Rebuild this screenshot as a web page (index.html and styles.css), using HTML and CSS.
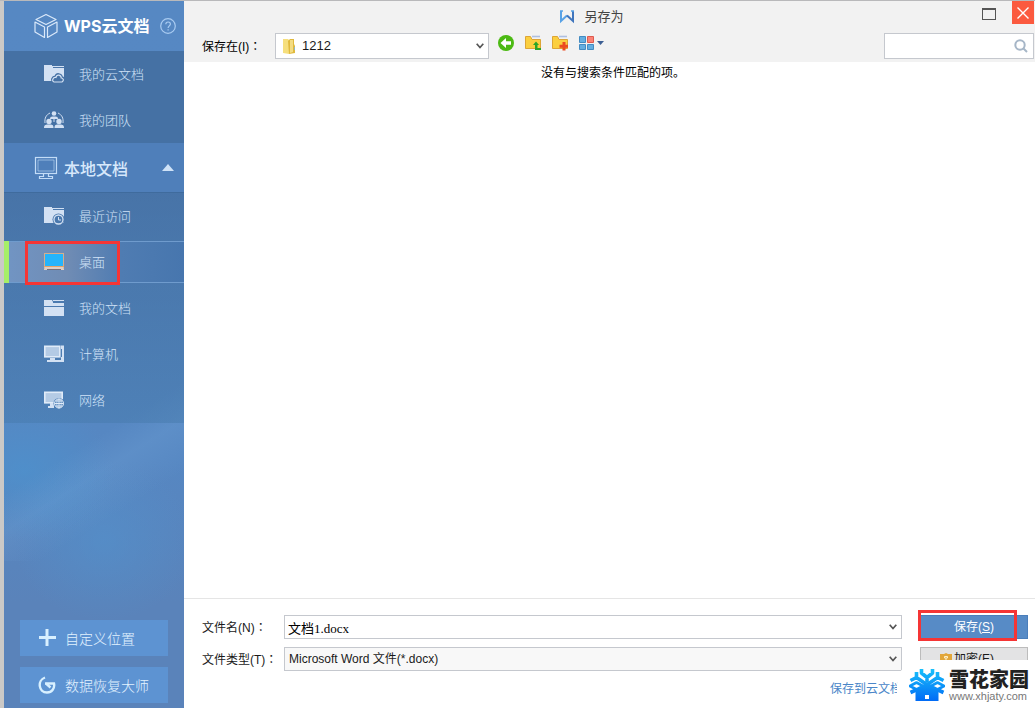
FILE: index.html
```html
<!DOCTYPE html>
<html lang="zh-CN">
<head>
<meta charset="utf-8">
<title>另存为</title>
<link rel="stylesheet" href="styles.css">
</head>
<body>
<div class="dialog">
  <nav class="sidebar">
    <div class="side-head">
      <svg class="head-icon" width="24" height="26" viewBox="0 0 24 26" fill="none" stroke="#dbe9fa" stroke-width="1.2" stroke-linejoin="round"><path d="M12 1.500 22 6.500 12 11.500 2 6.500Z"/><path d="M1 9 10.500 14V24.500L1 19Z"/><path d="M23 9 13.500 14V24.500L23 19Z"/></svg>
      <h1 class="head-title">WPS云文档</h1>
      <button class="help" aria-label="帮助"><svg width="16" height="16" viewBox="0 0 16 16" fill="none" stroke="#a9cbf1" stroke-width="1.2"><circle cx="8" cy="8" r="7.300"/><path d="M5.800 6.300C5.800 3.200 10.500 3.300 10.400 6.100C10.300 7.800 8.100 8 8.100 10M8.100 11.200V12.500"/></svg></button>
    </div>
    <ul class="side-list cloud">
      <li><a class="item" href="#cloud"><svg width="20" height="18" viewBox="0 0 20 18"><path fill="#d3e1f3" d="M0 0H8V1H20V16H0Z"/><path stroke="#4a75a8" d="M9 2.500H20"/><path fill="#d3e1f3" stroke="#4571a4" stroke-width="3" d="M10 16.500H18C20.500 15 19 12.500 17.500 12.700C17 9 12.500 8.500 12 12C8.500 11.500 7.500 15.500 10 16.500Z"/><path fill="#4571a4" stroke="#d3e1f3" stroke-width="1.200" d="M10 17H18C20.500 15.500 19 12.800 17.300 13C17 9.300 12.500 9 12 12.500C8.800 12 7.500 16 10 17Z"/></svg>我的云文档</a></li>
      <li><a class="item" href="#team"><svg width="20" height="18" viewBox="0 0 20 18"><g fill="#d3e1f3"><circle cx="10" cy="2.500" r="2.300"/><path d="M6 8C6 5.500 8 5.500 10 5.500S14 5.500 14 8Z"/><circle cx="5" cy="10.500" r="2.700"/><path d="M0 17C0 13.500 2 13.500 5 13.500S9.500 13.500 9.500 17Z"/><circle cx="15" cy="10.500" r="2.700"/><path d="M10.500 17C10.500 13.500 12 13.500 15 13.500S20 13.500 20 17Z"/></g><path fill="none" stroke="#d3e1f3" d="M6 2C2 4 .5 7 1 12M14 2C18 4 19.500 7 19 12M10 8V11"/></svg>我的团队</a></li>
    </ul>
    <button class="side-section">
      <svg class="head-icon" width="24" height="24" viewBox="0 0 24 24" fill="none" stroke="#c3dcf7" stroke-width="1.200"><rect x="1.500" y="1.500" width="21" height="16"/><path d="M4 4H20V15H4Z" stroke-width=".6"/><path d="M9.500 18V20.500H5.500V22.500H18.500V20.500H14.500V18"/></svg>
      <span>本地文档</span>
      <svg class="fold" width="12" height="7" viewBox="0 0 12 7"><path fill="#cfe2f7" d="M6 0 12 7H0Z"/></svg>
    </button>
    <ul class="side-list local">
      <li><a class="item" href="#recent"><svg width="20" height="18" viewBox="0 0 20 18"><path fill="#d3e1f3" d="M0 0H8V1H20V16H0Z"/><path stroke="#4a78ad" d="M9 2.500H20"/><circle cx="14.500" cy="12.500" r="6" fill="#4a78ad"/><circle cx="14.500" cy="12.500" r="4.500" fill="#4a78ad" stroke="#d3e1f3" stroke-width="1.300"/><path fill="none" stroke="#d3e1f3" d="M14.500 10V13H17"/></svg>最近访问</a></li>
      <li><a class="item selected" href="#desktop"><svg width="20" height="18" viewBox="0 0 20 18"><rect x=".5" y=".5" width="19" height="16" fill="#dccfc6" stroke="#d5ad8c"/><rect x="1" y="1" width="18" height="12" fill="#25b4fb"/><path stroke="#e6a368" d="M0 13.500H20"/><path stroke="#dccfc6" d="M0 15H20M0 16.500H20"/><path stroke="#776f78" d="M3 16.500H17"/></svg>桌面</a><span class="mark"></span></li>
      <li><a class="item" href="#docs"><svg width="20" height="18" viewBox="0 0 20 18"><path fill="#d3e1f3" d="M0 1H8L9 3H20V17H0Z"/><path stroke="#4b7ab0" d="M9 3.500H20M0 7.500H20"/><path stroke="#d3e1f3" d="M9 1.500H20"/></svg>我的文档</a></li>
      <li><a class="item" href="#computer"><svg width="20" height="18" viewBox="0 0 20 18"><rect x=".8" y="1.300" width="15" height="10.500" fill="#b4cbe5" stroke="#e0ebf8" stroke-width="1.600"/><path fill="#d3e1f3" d="M17 .5H20V17H12V15H17V12H18V4H17ZM6 13H11V15H13V17H3V15H6Z"/></svg>计算机</a></li>
      <li><a class="item" href="#network"><svg width="20" height="18" viewBox="0 0 20 18"><rect x=".8" y="1.300" width="17.400" height="10.500" fill="#b4cbe5" stroke="#e0ebf8" stroke-width="1.600"/><path fill="#d3e1f3" d="M6 12H10V17H4V15H6Z"/><circle cx="15" cy="12.500" r="5.500" fill="#4f80b7"/><circle cx="15" cy="12.500" r="4.500" fill="none" stroke="#e0ebf8"/><path fill="none" stroke="#e0ebf8" d="M10.500 12.500H19.500M15 8V17M11.500 10H18.500M11.500 15H18.500"/><ellipse cx="15" cy="12.500" rx="2.200" ry="4.500" fill="none" stroke="#e0ebf8" stroke-width=".7"/></svg>网络</a></li>
    </ul>
    <div class="side-actions">
      <button class="side-btn"><svg width="18" height="18" viewBox="0 0 18 18"><path stroke="#d8f0ff" stroke-width="3" d="M9 0V17M1 8.500H18"/></svg>自定义位置</button>
      <button class="side-btn"><svg width="18" height="18" viewBox="0 0 18 18" fill="none" stroke="#d8f0ff" stroke-width="2.400"><path d="M7 1.500C-1 4.500.5 16.500 9 16.500C14 16.500 17 12 16 7.500H7"/><path d="M8 7.500 12.500 11.500"/></svg>数据恢复大师</button>
    </div>
  </nav>

  <main class="main">
    <header class="top">
      <div class="titlebar">
        <svg width="16" height="14" viewBox="0 0 16 14" fill="none" stroke-width="2"><path stroke="#58a2e6" d="M2 1V11L8 5.500"/><path stroke="#3f75bd" d="M8 5.500 14 11V1"/><path stroke="#58a2e6" stroke-width="1.500" d="M1 1H4M12 1H15"/></svg>
        <span>另存为</span>
        <div class="win-btns">
          <button class="maximize" aria-label="最大化"></button>
          <button class="close" aria-label="关闭"><svg width="14" height="14" viewBox="0 0 14 14"><path stroke="#fff" stroke-width="1.400" d="M1.500 1.500 12.500 12.500M12.500 1.500 1.500 12.500"/></svg></button>
        </div>
      </div>
      <div class="toolbar">
        <label for="folder">保存在(I)<span class="colon">：</span></label>
        <div class="field folder">
          <svg class="lead" width="14" height="17" viewBox="0 0 14 17"><path fill="#f6df7d" d="M1 1H6L7 2V16L1 15Z"/><path fill="#e0b93d" d="M6 3 8 1H12V6L13 8V15L7 16Z"/><path fill="#f3dc83" d="M8 2H11V14L8 15Z"/><path fill="#8fb6c5" d="M12 9H13V12H12Z"/></svg>
          <select id="folder"><option>1212</option></select>
          <svg class="arrow" width="8" height="6" viewBox="0 0 8 6"><path fill="none" stroke="#555" stroke-width="1.700" d="M.7.8 4 4.500 7.300.8"/></svg>
        </div>
        <div class="tools">
          <button aria-label="后退"><svg width="16" height="16" viewBox="0 0 16 16"><circle cx="8" cy="8" r="8" fill="#4cba13"/><path fill="#fff" d="M2.500 8 8 3V6.300H13V9.700H8V13Z"/></svg></button>
          <button aria-label="向上"><svg width="16" height="16" viewBox="0 0 16 16"><path fill="#fbcf3f" stroke="#dda536" d="M.5 1.500H5.500L7 4.500H15.500V13.500H.5Z"/><path stroke="#aebfe0" stroke-width="1.600" d="M7 1.500H15"/><path fill="#2aa527" d="M8 10 11 6.500 14 10H12.500V13H16V15H10V10Z"/></svg></button>
          <button aria-label="新建文件夹"><svg width="16" height="16" viewBox="0 0 16 16"><path fill="#fbcf3f" stroke="#dda536" d="M.5 1.500H5.500L7 4.500H15.500V13.500H.5Z"/><path stroke="#aebfe0" stroke-width="1.600" d="M7 1.500H15"/><path stroke="#eb4b21" stroke-width="3" d="M12 7V15.500M7.500 11.200H16"/></svg></button>
          <button aria-label="视图"><svg width="26" height="16" viewBox="0 0 26 16"><path fill="#65aee0" stroke="#438bc2" d="M.5 1.500H6.500V7.500H.5ZM.5 9.500H6.500V14.500H.5ZM8.500 9.500H14.500V14.500H8.500Z"/><path fill="#fb8376" stroke="#de5a4e" d="M8.500 1.500H14.500V7.500H8.500Z"/><path fill="#3c5f94" d="M18 6H25L21.500 10Z"/></svg></button>
        </div>
        <div class="field search">
          <input type="search" aria-label="搜索">
          <svg class="lens" width="14" height="14" viewBox="0 0 14 14" fill="none" stroke="#a6b6c7" stroke-width="2"><circle cx="6" cy="6" r="4.700"/><path d="M9.500 9.500 13 13"/></svg>
        </div>
      </div>
    </header>
    <section class="files"><p>没有与搜索条件匹配的项。</p></section>
    <footer class="bottom">
      <label for="name">文件名(N)<span class="colon">：</span></label>
      <div class="field">
        <input id="name" class="name" type="text" value="文档1.docx">
        <svg class="arrow" width="8" height="6" viewBox="0 0 8 6"><path fill="none" stroke="#555" stroke-width="1.700" d="M.7.8 4 4.500 7.300.8"/></svg>
      </div>
      <div class="save-wrap"><button class="btn save"><span>保存(<u>S</u>)</span></button><span class="highlight"></span></div>
      <label for="type">文件类型(T)<span class="colon">：</span></label>
      <div class="field type">
        <select id="type"><option>Microsoft Word 文件(*.docx)</option></select>
        <svg class="arrow" width="8" height="6" viewBox="0 0 8 6"><path fill="none" stroke="#555" stroke-width="1.700" d="M.7.8 4 4.500 7.300.8"/></svg>
      </div>
      <button class="btn encrypt"><svg width="12" height="13" viewBox="0 0 12 13"><path fill="#e2a63a" d="M6 0 8 1H12V8C11 11 8 12 6 13C4 12 1 11 0 8V1H4Z"/><path fill="none" stroke="#fff0c8" d="M6 9V5M4.500 5V3.500H7.500V5Z"/></svg>加密(E)</button>
      <a class="cloud-link" href="#save-cloud">保存到云文档</a>
    </footer>
  </main>

  <div class="brand">
    <svg width="36" height="34" viewBox="0 0 36 34" fill="none" stroke-width="3.600" stroke-linejoin="round">
      <defs><linearGradient id="ice" x1="0" y1="0" x2="0" y2="34" gradientUnits="userSpaceOnUse"><stop offset="0" stop-color="#19c3fb"/><stop offset="1" stop-color="#0068f5"/></linearGradient></defs>
      <g stroke="url(#ice)"><path d="M12.500 1V5L18 9.500 23.500 5V1M18 9V14"/><path d="M7.500 4V9.500L1.500 12.500M7.500 9.500 17 16M28.500 4V9.500L34.500 12.500M28.500 9.500 19 16"/><path d="M1 18 7.500 14.500 14 18 7.500 21.500ZM35 18 28.500 14.500 22 18 28.500 21.500Z" stroke-width="2.600"/><path d="M1.500 24.500 8 21.500M34.500 24.500 28 21.500"/></g>
      <path fill="url(#ice)" d="M18 14 29.500 22V33H6.500V22Z"/>
      <path fill="#fff" d="M16 27H20V31H16Z"/>
    </svg>
    <div class="brand-text"><strong>雪花家园</strong><span>www.xhjaty.com</span></div>
  </div>
</div>
</body>
</html>
```

FILE: styles.css
```css
* { box-sizing: border-box; }
body, h1, ul, p { margin: 0; padding: 0; }
body {
  font: 12px/16px "Liberation Sans", "Noto Sans CJK SC", sans-serif;
  color: #1a1a1a;
}
button, input, select {
  font: inherit;
  color: inherit;
  margin: 0;
  padding: 0;
  border: 0;
  border-radius: 0;
  background: none;
  appearance: none;
}
svg { display: block; flex: none; }
ul { list-style: none; }

.dialog {
  position: relative;
  display: flex;
  min-height: 100vh;
  overflow: hidden;
  border-top: 1px solid #b9b9bb;
  background: #fff;
}

/* Sidebar */
.sidebar {
  display: flex;
  flex-direction: column;
  width: 184px;
  flex: none;
  border-left: 4px solid #cbc9c7;
  background:
    linear-gradient(148deg, transparent 52%, rgba(120, 170, 220, .22) 62%, transparent 76%) 0 300px / 100% 260px no-repeat,
    radial-gradient(ellipse 90px 70px at 20px 470px, rgba(76, 146, 206, .7), transparent),
    radial-gradient(ellipse 90px 80px at 100px 540px, rgba(83, 145, 204, .6), transparent),
    linear-gradient(#5688c3 0, #5687c2 65%, #5a83ba 85%, #5a83ba 100%);
}
.side-head, .side-section {
  display: flex;
  align-items: center;
  gap: 6px;
  height: 50px;
  padding: 0 8px 0 30px;
}
.head-title {
  flex: 1;
  font: bold 16px/24px Inter, "Noto Sans CJK SC", sans-serif;
  color: #fff;
  white-space: nowrap;
}
.side-section {
  width: 100%;
  height: 49px;
  padding-right: 10px;
  background: #4f7fba;
  font: 500 16px/24px "Noto Sans CJK SC", sans-serif;
  color: #d7e8fb;
  text-align: left;
}
.side-section span { flex: 1; }
.side-list { border-top: 1px solid #3f6b9d; }
.cloud { background: #4571a4; border-top: 0; }
.local { background: linear-gradient(rgba(64, 105, 153, .65), rgba(70, 122, 172, .5)); }
.side-list li { position: relative; height: 46px; padding: 2px 0; }
.item {
  display: flex;
  align-items: center;
  gap: 15px;
  height: 42px;
  padding-left: 40px;
  font-family: "Noto Sans CJK SC", sans-serif;
  font-size: 13px;
  font-weight: 300;
  color: #d0e2f7;
  text-decoration: none;
}
.selected {
  border: solid #6f9bcd;
  border-width: 1px 0;
  background: linear-gradient(90deg, #7195c4, #708cb4 35%, #4f7cb2 65%, #4776ae);
}
.selected::before {
  content: "";
  position: absolute;
  left: 0;
  width: 5px;
  height: 42px;
  background: #a6ef67;
}
.mark {
  position: absolute;
  left: 21px;
  top: 2px;
  width: 95px;
  height: 44px;
  border: 3px solid #f53535;
  pointer-events: none;
}
.side-actions {
  display: flex;
  flex-direction: column;
  gap: 11px;
  margin-top: auto;
  padding: 16px 16px 5px;
}
.side-btn {
  display: flex;
  align-items: center;
  gap: 9px;
  height: 36px;
  padding-left: 18px;
  background: #5d93d2;
  font: 300 14px/20px "Noto Sans CJK SC", sans-serif;
  color: #e2f2ff;
}

/* Main column */
.main {
  display: flex;
  flex-direction: column;
  flex: 1;
  min-width: 0;
}
.top { height: 61px; background: #f2f2f2; }
.titlebar {
  position: relative;
  display: flex;
  align-items: center;
  justify-content: center;
  gap: 9px;
  height: 32px;
  padding-right: 36px;
  font-size: 13px;
  color: #444;
}
.win-btns {
  position: absolute;
  top: 0;
  right: 1px;
  display: flex;
  gap: 16px;
}
.maximize {
  width: 14px;
  height: 12px;
  margin-top: 7px;
  border: 1px solid #555;
  border-top-width: 2px;
}
.close {
  display: grid;
  place-items: center;
  width: 22px;
  height: 23px;
  background: #fb5a3f;
}
.toolbar {
  display: flex;
  align-items: center;
  padding: 0 1px 0 18px;
}
.toolbar label { width: 73px; color: #000; }
.colon { font-family: "Noto Sans CJK TC", sans-serif; }
.colon:lang(zh) { font-feature-settings: "locl" 0; }
.field {
  position: relative;
  display: flex;
  align-items: center;
  height: 24px;
  border: 1px solid #c5c8ce;
  background: #fff;
}
.field input, .field select {
  width: 100%;
  height: 100%;
  padding: 0 16px 0 4px;
  outline: 0;
}
.arrow, .lead, .lens { position: absolute; pointer-events: none; }
.arrow { right: 4px; }
.lead { left: 6px; }
.lens { right: 5px; }
.toolbar .field { height: 26px; }
.folder { width: 214px; }
.folder select { padding-left: 26px; font-size: 13px; }
.tools {
  display: flex;
  gap: 11px;
  padding: 0 0 6px 9px;
}
.search { width: 150px; margin-left: auto; }

.files {
  flex: 1;
  padding: 3px 0 0 7px;
  text-align: center;
  color: #000;
}
.bottom {
  display: grid;
  grid-template-columns: 82px 1fr 108px;
  align-items: center;
  gap: 8px 0;
  padding: 16px 7px 11px 18px;
  border-top: 1px solid #e5e5e5;
}
.bottom .field { margin-right: 18px; }
.bottom .name {
  padding-left: 3px;
  font: 13px/16px "Liberation Serif", "Noto Sans CJK SC", serif;
  color: #000;
}
.bottom .type { background: #f8f8f8; }
.save-wrap { position: relative; }
.btn {
  display: flex;
  align-items: center;
  justify-content: center;
  gap: 2px;
  width: 100%;
  height: 24px;
}
.save { background: #578bc6; color: #fff; border: 1px solid #4a7ebb; }
.highlight {
  position: absolute;
  left: -2px;
  top: -5px;
  width: 99px;
  height: 31px;
  border: 3px solid #f53535;
  pointer-events: none;
}
.encrypt {
  padding-right: 14px;
  border: 1px solid #bcbcbc;
  background: #e3e3e4;
}
.cloud-link {
  grid-column: 2;
  justify-self: end;
  margin-right: 18px;
  padding-top: 2px;
  color: #4a86c8;
  text-decoration: none;
}

/* Site badge over the lower right corner */
.brand {
  position: absolute;
  right: 0;
  bottom: 0;
  display: flex;
  align-items: center;
  gap: 4px;
  height: 48px;
  padding: 2px 6px 0 12px;
  border-top-left-radius: 24px;
  background: #fff;
}
.brand-text { display: flex; flex-direction: column; }
.brand strong {
  font: 900 20px/22px "Noto Sans CJK SC", sans-serif;
  color: #222;
}
.brand span { font-size: 11px; line-height: 12px; color: #777; }
```
